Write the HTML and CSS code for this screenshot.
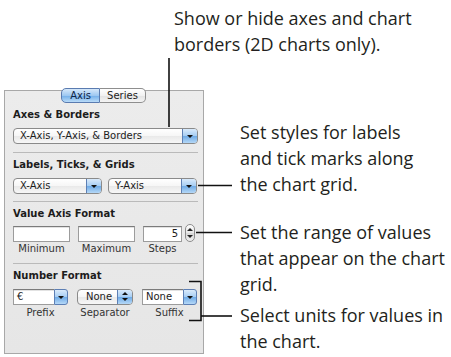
FILE: index.html
```html
<!DOCTYPE html>
<html lang="en">
<head>
    <meta charset="UTF-8">
    <title>Chart Inspector - Axis</title>
    <link rel="stylesheet" href="styles.css">
</head>
<body>
<div class="page">
    <p class="note note-top">Show or hide axes and chart<br>borders (2D charts only).</p>

    <div class="main">
        <div class="inspector">
            <div class="tabs">
                <span class="tab tab-on">Axis</span>
                <span class="tab">Series</span>
            </div>

            <div class="section">
                <div class="title">Axes &amp; Borders</div>
                <div class="popup wide">
                    <span class="value">X-Axis, Y-Axis, &amp; Borders</span>
                    <span class="arrow"></span>
                </div>
            </div>

            <div class="section">
                <div class="title">Labels, Ticks, &amp; Grids</div>
                <div class="row">
                    <div class="popup half">
                        <span class="value">X-Axis</span>
                        <span class="arrow"></span>
                    </div>
                    <div class="popup half">
                        <span class="value">Y-Axis</span>
                        <span class="arrow"></span>
                    </div>
                </div>
            </div>

            <div class="section">
                <div class="title title-tight">Value Axis Format</div>
                <div class="row">
                    <div class="cell cell-min">
                        <div class="field"></div>
                        <div class="caption">Minimum</div>
                    </div>
                    <div class="cell cell-max">
                        <div class="field"></div>
                        <div class="caption">Maximum</div>
                    </div>
                    <div class="cell cell-steps">
                        <div class="field num">5</div>
                        <div class="caption">Steps</div>
                    </div>
                    <div class="stepper"></div>
                </div>
            </div>

            <div class="section last">
                <div class="title">Number Format</div>
                <div class="row">
                    <div class="cell cell-prefix">
                        <div class="combo">
                            <span class="field">€</span>
                            <span class="arrow"></span>
                        </div>
                        <div class="caption caption-low">Prefix</div>
                    </div>
                    <div class="cell cell-sep">
                        <div class="popup">
                            <span class="value">None</span>
                            <span class="arrow updown"></span>
                        </div>
                        <div class="caption caption-low">Separator</div>
                    </div>
                    <div class="cell cell-suffix">
                        <div class="combo">
                            <span class="field">None</span>
                            <span class="arrow"></span>
                        </div>
                        <div class="caption caption-low">Suffix</div>
                    </div>
                </div>
            </div>
        </div>

        <div class="notes">
            <p class="note note-grid">Set styles for labels<br>and tick marks along<br>the chart grid.</p>
            <p class="note note-range">Set the range of values<br>that appear on the chart<br>grid.</p>
            <p class="note note-units">Select units for values in<br>the chart.</p>
        </div>
    </div>

    <!-- leader lines -->
    <svg class="leaders" width="451" height="357" viewBox="0 0 451 357">
        <g stroke="#111" stroke-width="1.6" fill="none">
            <path d="M169 58 V127"/>
            <path d="M198 185.5 H232"/>
            <path d="M196 232.5 H232"/>
            <path d="M189 281.5 H201 V320.5 H189"/>
            <path d="M201 316 H232"/>
        </g>
    </svg>
</div>
</body>
</html>
```

FILE: styles.css
```css
body{
    margin: 0;
    background-color: #fff;
    font-family: "DejaVu Sans", sans-serif;
}
.page{
    position: relative;
    width: 451px;
    height: 357px;
    overflow: hidden;
}
.note{
    margin: 0;
    font-family: "Open Sans", "Noto Sans", sans-serif;
    font-size: 18px;
    line-height: 26px;
    color: #231f20;
    white-space: nowrap;
}
.note-top{
    padding: 5px 0 0 174px;
}
.main{
    display: flex;
    margin-top: 33px;
}
.notes{
    margin-left: 36px;
}
.note-grid{
    margin-top: 29px;
}
.note-range{
    margin-top: 22px;
}
.note-units{
    margin-top: 5px;
}

/* inspector panel */
.inspector{
    box-sizing: border-box;
    width: 200px;
    margin-left: 4px;
    padding: 0 5px 10px 8px;
    border: 1px solid #a8a8a8;
    background: linear-gradient(#ececec, #e6e6e6);
    color: #1c1c1c;
    font-size: 10px;
}
.tabs{
    display: flex;
    justify-content: center;
    margin-top: -3px;
    margin-left: -4px;
}
.tab{
    box-sizing: border-box;
    height: 15px;
    width: 46px;
    line-height: 13px;
    text-align: center;
    border: 1px solid #8e8e8e;
    border-left: none;
    border-radius: 0 5px 5px 0;
    background: linear-gradient(#ffffff, #f1f1f1 50%, #e2e2e2 51%, #f4f4f4);
}
.tab-on{
    width: 39px;
    border-left: 1px solid #5a7bb0;
    border-color: #5a7bb0;
    border-radius: 5px 0 0 5px;
    color: #0d2447;
    background: linear-gradient(#d6e8fa, #9ec8f1 50%, #72aee9 51%, #b9dbf8);
}
.section{
    padding: 6px 0 8px;
    border-bottom: 1px solid #bababa;
}
.section:first-of-type{
    padding-top: 5px;
    padding-bottom: 9px;
}
.section.last{
    padding-bottom: 0;
    border-bottom: none;
}
.title{
    font-weight: bold;
    line-height: 12px;
    margin-bottom: 7px;
    white-space: nowrap;
}
.title-tight{
    margin-bottom: 6px;
}
.section:nth-of-type(3){
    padding-bottom: 7px;
}
.row{
    display: flex;
}

/* popup buttons */
.popup{
    box-sizing: border-box;
    display: flex;
    height: 16px;
    border: 1px solid #8a8a8a;
    border-radius: 4px;
    background: linear-gradient(#ffffff, #f6f6f6 50%, #e9e9e9 51%, #f7f7f7);
}
.popup.wide{
    width: 185px;
}
.popup.half{
    width: 89px;
}
.popup.half + .popup.half{
    margin-left: 6px;
}
.value{
    flex: 1;
    padding-left: 6px;
    line-height: 14px;
    white-space: nowrap;
}
.arrow{
    position: relative;
    width: 14px;
    border-left: 1px solid #5d7fb4;
    border-radius: 0 3px 3px 0;
    background: linear-gradient(#d9eafb, #a6cdf3 50%, #6eaae6 51%, #b5d8f7);
}
.arrow::after{
    content: "";
    position: absolute;
    left: 50%;
    top: 50%;
    margin: -1px 0 0 -3px;
    border-left: 3px solid transparent;
    border-right: 3px solid transparent;
    border-top: 3px solid #111;
}
.arrow.updown::before{
    content: "";
    position: absolute;
    left: 50%;
    top: 50%;
    margin: -5px 0 0 -3px;
    border-left: 3px solid transparent;
    border-right: 3px solid transparent;
    border-bottom: 3px solid #111;
}
.arrow.updown::after{
    margin-top: 1px;
}

/* text fields */
.cell{
    display: flex;
    flex-direction: column;
    align-items: center;
}
.field{
    box-sizing: border-box;
    align-self: stretch;
    height: 16px;
    line-height: 14px;
    padding: 0 3px;
    border: 1px solid #9c9c9c;
    border-top-color: #7b7b7b;
    background-color: #fff;
    box-shadow: inset 0 1px 0 #e2e2e2;
    white-space: nowrap;
}
.field.num{
    text-align: right;
}
.cell-min,
.cell-max{
    width: 57px;
}
.cell-max,
.cell-steps{
    margin-left: 8px;
}
.cell-steps{
    width: 39px;
}
.stepper{
    position: relative;
    box-sizing: border-box;
    width: 10px;
    height: 18px;
    margin: -2px 0 0 3px;
    border: 1px solid #8d8d8d;
    border-radius: 5px;
    background: linear-gradient(#fdfdfd, #e6e6e6 50%, #d6d6d6 51%, #f0f0f0);
}
.stepper::before,
.stepper::after{
    content: "";
    position: absolute;
    left: 1px;
    border-left: 3px solid transparent;
    border-right: 3px solid transparent;
}
.stepper::before{
    top: 3px;
    border-bottom: 3px solid #222;
}
.stepper::after{
    bottom: 3px;
    border-top: 3px solid #222;
}
.caption{
    margin-top: 1px;
    line-height: 12px;
    color: #333;
    white-space: nowrap;
}
.caption-low{
    margin-top: 2px;
}

/* number format combos */
.cell-prefix,
.cell-suffix{
    width: 55px;
}
.cell-sep{
    width: 56px;
    margin: 0 9px;
}
.cell-sep .popup{
    align-self: stretch;
}
.cell-sep .value{
    padding-left: 8px;
}
.combo{
    display: flex;
    align-self: stretch;
    height: 16px;
}
.combo .field{
    flex: 1;
    border-right: none;
}
.combo .arrow{
    box-sizing: border-box;
    border: 1px solid #5d7fb4;
}

.leaders{
    position: absolute;
    left: 0;
    top: 0;
    pointer-events: none;
}
```
